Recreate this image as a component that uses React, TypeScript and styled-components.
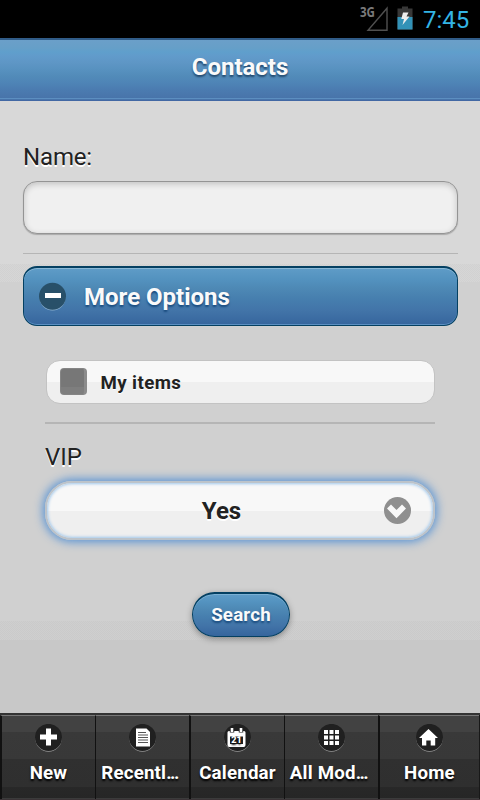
import React from "react";
import styled, { createGlobalStyle, css } from "styled-components";

const Global = createGlobalStyle`
  * { box-sizing: border-box; }
  body { margin: 0; background: #d0d0d0; }
`;

const Screen = styled.div`
  width: 480px;
  height: 800px;
  display: flex;
  flex-direction: column;
  overflow: hidden;
  font-family: Roboto, "Liberation Sans", sans-serif;
  color: #222;
  white-space: nowrap;
`;

const StatusBar = styled.div`
  height: 38px;
  flex: none;
  background: #000;
  display: flex;
  justify-content: flex-end;
  align-items: flex-start;
  padding: 5px 10px 0 0;
`;

const Clock = styled.span`
  color: #33b5e5;
  font-size: 24px;
  line-height: 30px;
  width: 47px;
  margin-left: 10px;
`;

const Header = styled.header`
  height: 63px;
  flex: none;
  border-top: 2px solid #305c88;
  border-bottom: 1px solid #4268a4;
  background: linear-gradient(#6b9fc9 0, #669fc8 8px, #5f9fcc 12px, #619bcb 16px, #5e96c5 23px, #5791bf 30px, #528bb9 36px, #4e84b6 43px, #4b7bb0 50px, #4874aa 58px, #5c8ec0 58px, #5c8ec0 59px, #4874aa 59px);
  display: flex;
  justify-content: center;
`;

const Title = styled.h1`
  margin: 0;
  font-size: 24px;
  line-height: 54px;
  font-weight: 700;
  color: #fafafa;
  text-shadow: 0 2px 2px rgba(25, 60, 95, 0.85);
`;

const Page = styled.main`
  flex: 1;
  padding: 40px 22px 0 23px;
  display: flex;
  flex-direction: column;
  background:
    linear-gradient(#d8d8d8, #d8d8d8) 0 0 / 100% 163px no-repeat,
    linear-gradient(#d0d0d0, #d0d0d0) 0 181px / 100% 339px no-repeat,
    linear-gradient(#c8c8c8, #c8c8c8) 0 539px / 100% 80px no-repeat,
    linear-gradient(transparent 339px, rgba(0, 0, 0, 0.035) 339px),
    conic-gradient(#d1d1d1 25%, #d6d6d6 0 50%, #d1d1d1 0 75%, #d6d6d6 0) 0 0 / 2px 2px;
`;

const Label = styled.label`
  font-size: 24px;
  line-height: 32px;
  letter-spacing: -0.15px;
  text-shadow: 0 2px 0 #fff;
`;

const NameInput = styled.input`
  width: 435px;
  height: 53px;
  margin: 8px 0 19px;
  padding: 0 12px;
  border: 1px solid #949494;
  border-radius: 14px;
  background: #f0f0f0;
  box-shadow: inset 0 2px 6px rgba(0, 0, 0, 0.2), 0 1px 1px #aaa;
  font: 24px Roboto, sans-serif;
  outline: 0;
`;

const Rule = styled.hr<{ $thick?: boolean }>`
  width: 100%;
  margin: 0;
  border: 0;
  height: ${(p) => (p.$thick ? 2 : 1)}px;
  flex: none;
  background: #b5b5b5;
`;

const blueButton = css`
  border: 1px solid #044062;
  border-top-width: 2px;
  color: #fafafa;
  font-family: inherit;
  font-weight: 700;
  padding: 0;
  background: linear-gradient(#5f9cc7, #5392bf 20%, #4e89b5 35%, #467eae 55%, #4274a8 75%, #36659d);
  text-shadow: 0 2px 2px #194b7e;
`;

const CollapseButton = styled.button`
  ${blueButton}
  width: 435px;
  height: 60px;
  flex: none;
  margin-top: 12px;
  padding-left: 15px;
  display: flex;
  align-items: center;
  gap: 18px;
  border-radius: 14px;
  box-shadow: inset 0 1px 0 #8ab8d6, inset 0 -1px 0 #5b8fc2;
  font-size: 24px;
`;

const Options = styled.section`
  width: 390px;
  margin: 34px 0 0 22px;
  display: flex;
  flex-direction: column;
`;

const CheckboxRow = styled.div`
  height: 44px;
  width: 389px;
  flex: none;
  margin-bottom: 18px;
  margin-left: 1px;
  display: flex;
  align-items: center;
  gap: 13px;
  padding: 0 0 1px 13px;
  border: 1px solid #c3c3c3;
  border-radius: 14px;
  background: linear-gradient(#f8f8f8 21px, #efefef 21px);
  font-size: 18.7px;
  line-height: 25px;
  font-weight: 700;
  letter-spacing: 0.4px;
  text-shadow: 0 1px 0 #fff;
`;

const CheckText = styled.span`
  padding: 3px 0 0 0.5px;
`;

const CheckBox = styled.span`
  width: 27px;
  height: 27px;
  border-radius: 4px;
  border: 1px solid #858585;
  border-right: 3px solid #8b8b8b;
  background: linear-gradient(#777 18px, #7e7e7e 18px);
`;

const VipLabel = styled(Label)`
  margin: 17px 0 8px;
  letter-spacing: 0;
`;

const Select = styled.button`
  height: 59px;
  width: 390px;
  padding: 0 22px 0 0;
  display: flex;
  align-items: center;
  color: #222;
  font: 700 24px Roboto, sans-serif;
  text-shadow: 0 2px 0 #fff;
  border: 2px solid #bcc3ca;
  border-radius: 27px;
  background: linear-gradient(#f8f8f8 28px, #efefef 28px);
  box-shadow: inset 0 0 3px 1px #9fc7ec, 0 0 10px 2px #5893d4;
`;

const SelectText = styled.span`
  flex: 1;
  padding-left: 12px;
  text-align: center;
`;

const SearchButton = styled.button`
  ${blueButton}
  width: 98px;
  height: 45px;
  flex: none;
  margin: 52px 0 0 169px;
  border-radius: 23px;
  box-shadow: inset 0 1px 0 #7bb0d3, 0 2px 6px rgba(0, 0, 0, 0.35);
  font-size: 18.7px;
  letter-spacing: 0.2px;
`;

const NavBar = styled.nav`
  height: 87px;
  flex: none;
  display: grid;
  grid-template-columns: 95px 94px 95px 94px 101px 1px;
  border-top: 2px solid #333;
  border-bottom: 1px solid #3a3336;
  background: #181818;
`;

const NavItem = styled.a<{ $divider?: number }>`
  min-width: 0;
  padding: 8px 1px 0;
  border-left: ${(p) => p.$divider ?? 1}px solid #111;
  border-top: 1px solid #777;
  display: flex;
  flex-direction: column;
  align-items: center;
  gap: 8px;
  background: linear-gradient(#424242 16px, #393939 16px, #383838 43px, #303030 43px, #2f2f2f 71px, #282828 71px, #262626 82px, #3b3b3b 82px);
  color: #fff;
  text-shadow: 0 2px 2px #000;
`;

const NavText = styled.span`
  font-size: 18.7px;
  line-height: 27px;
  font-weight: 700;
  letter-spacing: 0.2px;
`;

const Dots = styled.span`
  margin-right: 6px;
  letter-spacing: -1.6px;
`;

const StatusSignal = styled.svg`
  margin-top: -5px;
`;

const SignalIcon = () => (
  <StatusSignal width="32" height="33" viewBox="0 -5 32 33">
    <text x="4" y="12.2" fill="#7a7a7a" fontFamily="Open Sans" fontWeight="700" fontSize="13.5" textLength="15" lengthAdjust="spacingAndGlyphs">3G</text>
    <path d="M12 25.2H31V3.2Z" fill="none" stroke="#505050" strokeWidth="1.4" />
  </StatusSignal>
);

const BatteryIcon = () => (
  <svg width="16" height="25" viewBox="0 0 16 25">
    <path d="M5 1.500h6v2h4.500v21H.5v-21H5z" fill="#383838" />
    <path d="M.5 12h15v12.500H.5z" fill="#3292b7" />
    <path d="M6 7.500h5.500l-2 4h3L5.500 20l1.500-6H4.300z" fill="#eee" />
  </svg>
);

const StatusGap = styled.span`
  width: 9px;
`;

const MinusIcon = () => (
  <svg width="27" height="29" viewBox="0 0 27 29">
    <circle cx="13.500" cy="15.500" r="13" fill="#8eb2cf" />
    <circle cx="13.500" cy="14.300" r="13.500" fill="#285069" />
    <path d="M6 11h16v5H6z" fill="#fff" />
  </svg>
);

const ArrowIcon = () => (
  <svg width="27" height="27" viewBox="0 0 27 27">
    <circle cx="13.500" cy="13.500" r="13.500" fill="#8f8f8f" />
    <path d="M3 11.500 7 7.500l5.500 5.500L18 7.500l4 4-9.500 9.700z" fill="#f8f8f8" />
  </svg>
);

const glyphs: Record<string, React.ReactNode> = {
  plus: <path d="M11 4.500h5v6h6v5h-6v6h-5v-6H5v-5h6z" fill="#fff" />,
  page: (
    <>
      <path d="M7 4.500h10.500L21 8v14.500H7z" fill="#fff" />
      <path d="M9 8.500h8M9 11h10M9 13.500h10M9 16h10M9 18.500h10" stroke="#555" strokeWidth="1" />
    </>
  ),
  calendar: (
    <>
      <path d="M3.500 8.500q0-1.500 1.500-1.500H20q1.500 0 1.500 1.500v12.500q0 2-1.800 2H5.300q-1.800 0-1.800-2z" fill="#fff" />
      <path d="M8 4v4.500M17 4v4.500" stroke="#222" strokeWidth="4.500" />
      <path d="M8 4v4M17 4v4" stroke="#fff" strokeWidth="2.600" />
      <path d="M6 12.500h13v7.500H6z" fill="#222" />
      <text x="7.300" y="19.300" fontFamily="Roboto" fontSize="8.500" fontWeight="900" fill="#fff" textLength="10.500" lengthAdjust="spacingAndGlyphs">21</text>
    </>
  ),
  grid: (
    <path d="M6 6h4v4H6zm5.500 0h4v4h-4zm5.500 0h4v4h-4zM6 11.500h4v4H6zm5.500 0h4v4h-4zm5.500 0h4v4h-4zM6 17h4v4H6zm5.500 0h4v4h-4zm5.500 0h4v4h-4z" fill="#fff" />
  ),
  home: <path d="M12.500 5 22 14h-2.800v7.500h-4.500v-5h-4.400v5H6V14H3z" fill="#fff" />,
};

const NavIcon = ({ name }: { name: string }) => (
  <svg width="27" height="28" viewBox="0 0 27 28">
    <circle cx="13.500" cy="14.500" r="13.200" fill="#999" />
    <circle cx="13.500" cy="13.400" r="13.500" fill="#202020" />
    {glyphs[name]}
  </svg>
);

const items = [
  { icon: "plus", text: "New", divider: 2 },
  { icon: "page", text: "Recentl", cut: true, divider: 1 },
  { icon: "calendar", text: "Calendar", divider: 2 },
  { icon: "grid", text: "All Mod", cut: true, divider: 1 },
  { icon: "home", text: "Home", divider: 2 },
];

export default function App() {
  return (
    <Screen>
      <Global />
      <StatusBar>
        <SignalIcon />
        <StatusGap />
        <BatteryIcon />
        <Clock>7:45</Clock>
      </StatusBar>
      <Header>
        <Title>Contacts</Title>
      </Header>
      <Page>
        <Label htmlFor="name">Name:</Label>
        <NameInput id="name" />
        <Rule />
        <CollapseButton>
          <MinusIcon />
          More Options
        </CollapseButton>
        <Options>
          <CheckboxRow>
            <CheckBox />
            <CheckText>My items</CheckText>
          </CheckboxRow>
          <Rule $thick />
          <VipLabel>VIP</VipLabel>
          <Select>
            <SelectText>Yes</SelectText>
            <ArrowIcon />
          </Select>
        </Options>
        <SearchButton>Search</SearchButton>
      </Page>
      <NavBar>
        {items.map((item) => (
          <NavItem key={item.text} $divider={item.divider}>
            <NavIcon name={item.icon} />
            <NavText>
              {item.text}
              {item.cut && <Dots>...</Dots>}
            </NavText>
          </NavItem>
        ))}
      </NavBar>
    </Screen>
  );
}
